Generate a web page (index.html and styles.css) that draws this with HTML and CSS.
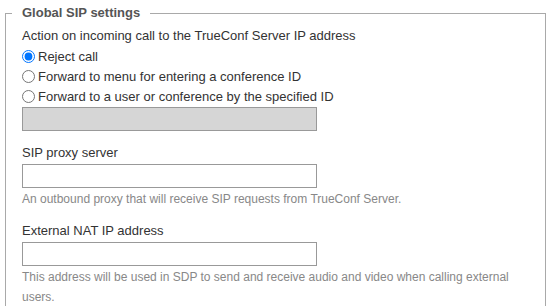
FILE: index.html
```html
<!DOCTYPE html>
<html>
<head>
<meta charset="utf-8">
<link rel="stylesheet" href="styles.css">
</head>
<body>
<fieldset class="settings">
  <legend class="settings-title">Global SIP settings</legend>
  <div class="field-label">Action on incoming call to the TrueConf Server IP address</div>
  <label class="radio-row"><input type="radio" name="action" checked><span>Reject call</span></label>
  <label class="radio-row"><input type="radio" name="action"><span>Forward to menu for entering a conference ID</span></label>
  <label class="radio-row"><input type="radio" name="action"><span>Forward to a user or conference by the specified ID</span></label>
  <input class="text-input" type="text" disabled>

  <div class="group">
    <div class="field-label">SIP proxy server</div>
    <input class="text-input" type="text">
    <div class="help">An outbound proxy that will receive SIP requests from TrueConf Server.</div>
  </div>

  <div class="group">
    <div class="field-label">External NAT IP address</div>
    <input class="text-input" type="text">
    <div class="help">This address will be used in SDP to send and receive audio and video when calling external users.</div>
  </div>
</fieldset>
</body>
</html>
```
FILE: styles.css
```css
html, body {
  margin: 0;
  padding: 0;
  background: #fff;
  font-family: "Liberation Sans", Arial, sans-serif;
  font-size: 13px;
  color: #333;
}

.settings {
  margin: 0 6px 0 5px;
  padding: 0 16px 0 16px;
  border: 1px solid #a9a9a9;
  border-bottom: none;
  min-width: 0;
}

.settings-title {
  margin-left: -10px;
  padding: 0 10px;
  line-height: 26px;
  font-weight: bold;
  color: #555;
}

.field-label {
  line-height: 20px;
  color: #333;
}

.radio-row {
  display: flex;
  align-items: center;
  height: 20px;
  color: #333;
}

.radio-row input {
  margin: 0 3px 0 0;
  width: 13px;
  height: 13px;
}

.text-input {
  display: block;
  box-sizing: border-box;
  width: 295px;
  height: 24px;
  margin: 1px 0 0 0;
  border: 1px solid #999;
  border-radius: 0;
  background: #fff;
  padding: 0 4px;
  font: inherit;
}

.text-input:disabled {
  background: #d6d6d6;
  border-color: #999;
}

.group {
  margin-top: 12px;
}

.help {
  font-size: 12px;
  line-height: 20px;
  color: #888;
  margin-top: 1px;
}
```
